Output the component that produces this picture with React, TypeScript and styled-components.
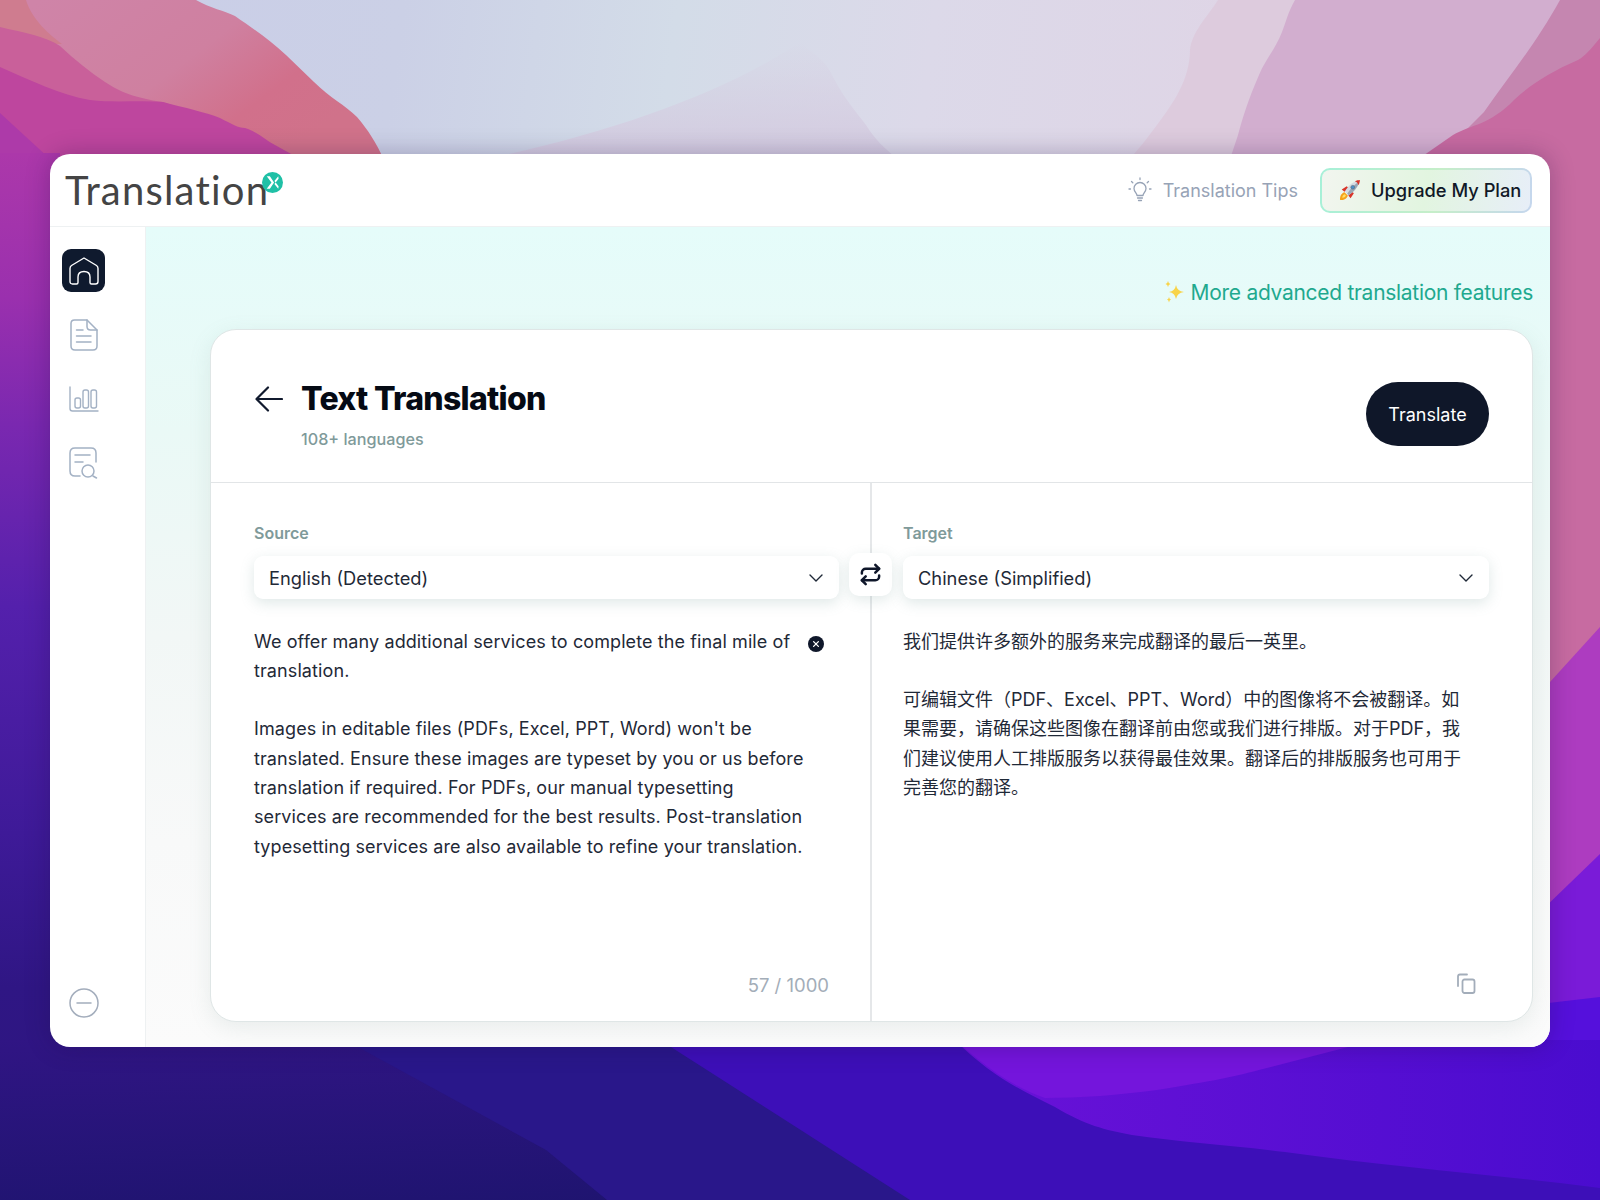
import { FC } from 'react';
import { ChevronDown, Repeat } from 'lucide-react';
import styled, { createGlobalStyle } from 'styled-components';

const GlobalStyle = createGlobalStyle`
  html, body {
    margin: 0;
    padding: 0;
  }
  body {
    font-family: Inter, "Noto Sans CJK SC", "Liberation Sans", sans-serif;
    color: #1f2937;
  }
`;

const SOURCE_PARAGRAPHS = [
  'We offer many additional services to complete the final mile of translation.',
  "Images in editable files (PDFs, Excel, PPT, Word) won't be translated. Ensure these images are typeset by you or us before translation if required. For PDFs, our manual typesetting services are recommended for the best results. Post-translation typesetting services are also available to refine your translation.",
];

const TARGET_PARAGRAPHS = [
  '我们提供许多额外的服务来完成翻译的最后一英里。',
  '可编辑文件（PDF、Excel、PPT、Word）中的图像将不会被翻译。如果需要，请确保这些图像在翻译前由您或我们进行排版。对于PDF，我们建议使用人工排版服务以获得最佳效果。翻译后的排版服务也可用于完善您的翻译。',
];

const Wallpaper: FC = () => (
  <WallpaperSvg viewBox="0 0 1600 1200" preserveAspectRatio="none">
    <defs>
      <linearGradient id="sky" x1="0" y1="0" x2="1" y2="0.1">
        <stop offset="0" stopColor="#c9cde8" />
        <stop offset="0.25" stopColor="#cbd0e6" />
        <stop offset="0.42" stopColor="#d3dce8" />
        <stop offset="0.58" stopColor="#dcd9e9" />
        <stop offset="1" stopColor="#e2d0e2" />
      </linearGradient>
      <linearGradient id="hillFade" gradientUnits="userSpaceOnUse" x1="0" y1="42" x2="0" y2="150">
        <stop offset="0" stopColor="#d7cce0" stopOpacity="0" />
        <stop offset="1" stopColor="#d3cbe0" stopOpacity="0.95" />
      </linearGradient>
      <linearGradient id="coral" x1="0.05" y1="0.1" x2="0.95" y2="0.6">
        <stop offset="0" stopColor="#cf84a8" />
        <stop offset="0.5" stopColor="#cf80a0" />
        <stop offset="0.78" stopColor="#d1708b" />
        <stop offset="1" stopColor="#d0728a" />
      </linearGradient>
      <linearGradient id="leftEdge" x1="0" y1="0" x2="0" y2="1">
        <stop offset="0" stopColor="#ac38aa" />
        <stop offset="0.16" stopColor="#9a30ae" />
        <stop offset="0.3" stopColor="#7a28b0" />
        <stop offset="0.5" stopColor="#5420ac" />
        <stop offset="0.75" stopColor="#3e1a98" />
        <stop offset="0.92" stopColor="#2f1684" />
        <stop offset="1" stopColor="#2e1682" />
      </linearGradient>
      <linearGradient id="navy" x1="0" y1="0" x2="0.4" y2="1">
        <stop offset="0" stopColor="#301584" />
        <stop offset="1" stopColor="#1f1470" />
      </linearGradient>
      <linearGradient id="bright" x1="0" y1="0" x2="1" y2="0">
        <stop offset="0" stopColor="#6a12d8" />
        <stop offset="1" stopColor="#4a0ccf" />
      </linearGradient>
    </defs>
    <rect width="1600" height="1200" fill="url(#sky)" />

    {/* top right hills */}
    <path d="M800 42 C815 55 825 60 832 75 C845 100 855 110 866 125 C875 140 885 148 894 156 H500 C620 130 730 90 800 42 Z" fill="url(#hillFade)" />
    <path d="M1218 0 C1205 20 1192 32 1190 50 C1190 80 1172 105 1157 125 C1147 138 1140 148 1132 156 H1240 L1300 0 Z" fill="#ddcbdd" />
    <path d="M1295 0 C1288 12 1286 22 1282 32 C1275 50 1265 60 1259 75 C1248 100 1242 120 1238 135 L1231 156 H1600 V0 Z" fill="#d2aecf" />
    <path d="M1560 0 C1535 45 1510 75 1484 112 L1440 156 H1600 V0 Z" fill="#c586b0" />
    <path d="M1600 38 C1590 50 1585 56 1578 60 C1550 72 1530 85 1514 100 C1490 125 1470 125 1453 135 L1417 160 V700 H1600 Z" fill="#c76ba1" />

    {/* top left ridges */}
    <path d="M0 0 H196 C210 8 225 11 235 16 C255 30 270 40 286 55 L314 82 C330 98 345 105 357 117 C368 130 376 142 384 160 H0 Z" fill="url(#coral)" />
    <path d="M0 0 H26 C32 20 50 35 62 44 H0 Z" fill="#cf7c8f" />
    <path d="M0 27 C25 33 45 36 60 46 C75 60 90 72 105 82 C120 92 135 98 163 102 L240 128 L302 160 H0 Z" fill="#c9609a" />
    <path d="M0 67 C30 80 60 95 90 100 C115 103 140 100 163 102 C185 108 205 112 220 118 C232 124 238 128 245 128 C258 132 265 140 275 145 L302 160 H0 Z" fill="#be469e" />
    <path d="M0 113 L62 170 H0 Z" fill="#ad3aa9" />

    {/* side strips */}
    <rect x="0" y="153" width="60" height="907" fill="url(#leftEdge)" />
    <path d="M1540 693 L1600 627 V860 L1540 912 Z" fill="#ad3cc0" />
    <path d="M1540 912 L1600 854 V1000 L1540 1004 Z" fill="#7a1bd8" />
    <path d="M1540 1004 L1600 997 V1200 H1540 Z" fill="#5510dc" />

    {/* bottom ridges */}
    <rect x="0" y="1040" width="1600" height="160" fill="url(#navy)" />
    <path d="M345 1040 L546 1150 L607 1200 H920 V1040 Z" fill="#29178a" />
    <path d="M660 1040 L910 1200 H1600 V1040 Z" fill="#3d0fb8" />
    <path d="M955 1040 C990 1075 1020 1090 1055 1107 C1085 1125 1105 1130 1132 1135 C1180 1142 1230 1145 1285 1152 C1400 1168 1500 1175 1600 1188 V1040 Z" fill="url(#bright)" />
    <path d="M955 1040 C990 1070 1015 1088 1045 1098 C1080 1098 1120 1095 1157 1090 C1200 1083 1230 1078 1259 1070 L1375 1040 Z" fill="#7415dc" />
  </WallpaperSvg>
);

const HomeIcon: FC = () => (
  <svg width="30" height="28" viewBox="0 0 30 28" fill="none" stroke="#fff" strokeWidth="1.4" strokeLinejoin="round">
    <path d="M15 1 L27.5 8.5 Q29 9.5 29 11.5 V24.5 Q29 27 26.5 27 H22.5 Q21 27 21 25.5 V20 Q21 14.5 15 14.5 Q9 14.5 9 20 V25.5 Q9 27 7.5 27 H3.5 Q1 27 1 24.5 V11.5 Q1 9.5 2.5 8.5 Z" />
  </svg>
);

const DocIcon: FC = () => (
  <svg width="28" height="32" viewBox="0 0 28 32" fill="none" stroke="#a3b1c4" strokeWidth="1.5" strokeLinecap="round" strokeLinejoin="round">
    <path d="M4.5 1 H17 L27 11 V27 Q27 31 23 31 H5 Q1 31 1 27 V4.5 Q1 1 4.5 1 Z" />
    <path d="M17 1 V7.5 Q17 11 20.5 11 H27" />
    <path d="M6.5 11 H13 M6.5 17 H21 M6.5 23 H21" />
  </svg>
);

const ChartIcon: FC = () => (
  <svg width="30" height="26" viewBox="0 0 30 26" fill="none" stroke="#a3b1c4" strokeWidth="1.4" strokeLinecap="round" strokeLinejoin="round">
    <path d="M1 1 V22.5 Q1 25 3.5 25 H29" />
    <rect x="6" y="12" width="5.5" height="10" rx="2" />
    <rect x="14" y="4" width="5.5" height="18" rx="2" />
    <rect x="22" y="4" width="5.5" height="18" rx="2" />
  </svg>
);

const SearchDocIcon: FC = () => (
  <svg width="30" height="32" viewBox="0 0 30 32" fill="none" stroke="#a3b1c4" strokeWidth="1.5" strokeLinecap="round" strokeLinejoin="round">
    <path d="M11 29 H6 Q1 29 1 24 V6 Q1 1 6 1 H22 Q27 1 27 6 V15" />
    <path d="M6 8 H21 M6 15 H14" />
    <circle cx="19" cy="24" r="6" />
    <path d="M24 29 L27.5 31" />
  </svg>
);

const MinusCircleIcon: FC = () => (
  <svg width="30" height="30" viewBox="0 0 30 30" fill="none" stroke="#a3adbc" strokeWidth="1.5" strokeLinecap="round">
    <circle cx="15" cy="15" r="14" />
    <path d="M8 15 H22" />
  </svg>
);

const BulbIcon: FC = () => (
  <svg width="24" height="26" viewBox="0 0 24 26" fill="none" stroke="#97a3b6" strokeWidth="1.3" strokeLinecap="round" strokeLinejoin="round">
    <path d="M12 1 V2.5 M3.5 4.5 L4.8 5.8 M20.5 4.5 L19.2 5.8 M1 12 H2.5 M21.5 12 H23" />
    <path d="M9 18.5 C9 16 6 15 6 11.5 A6 6 0 0 1 18 11.5 C18 15 15 16 15 18.5 Z" />
    <path d="M9.5 21 H14.5 M10.5 23.5 H13.5" />
  </svg>
);

const RocketIcon: FC = () => (
  <svg width="22" height="22" viewBox="0 0 20 20">
    <path d="M1 19 C0.5 15.5 2.5 12.5 5 12 L8 15 C7.5 17.5 4.5 19.5 1 19 Z" fill="#f6a21a" />
    <path d="M3 17 C2.9 15.3 3.9 14 5.2 13.8 L6.2 14.8 C6 16 4.8 17.1 3 17 Z" fill="#ffe066" />
    <path d="M2.5 9.5 L7 6.5 L8.5 8 L5 11.5 Z M10.5 17.5 L13.5 13 L12 11.5 L8.5 15 Z" fill="#d8352a" />
    <path d="M5.5 11.5 C8 6.5 12 2.5 19 1 C17.5 8 13.5 12 8.5 14.5 Z" fill="#d5dce3" />
    <path d="M7.5 13.5 C10 9 14 5 18.4 2.2 C17 8 13 12 8.5 14.5 Z" fill="#9aa8b5" />
    <path d="M14.3 2.1 C16 2.6 17.4 4 17.9 5.7 C18.6 3.8 18.9 2.4 19 1 C17.6 1.1 16.2 1.4 14.3 2.1 Z" fill="#d8352a" />
    <circle cx="12.5" cy="7.5" r="1.7" fill="#4a90c8" stroke="#5d6b78" strokeWidth="0.6" />
  </svg>
);

const SparkleIcon: FC = () => (
  <svg width="20" height="22" viewBox="0 0 20 22" fill="#f8d44a">
    <path d="M11 4 Q12 10 19 11 Q12 12 11 18 Q10 12 4 11 Q10 10 11 4 Z" />
    <path d="M3 0 Q3.4 2.6 5.5 3 Q3.4 3.4 3 6 Q2.6 3.4 0.5 3 Q2.6 2.6 3 0 Z" />
    <path d="M4 16 Q4.3 18 6 18.5 Q4.3 19 4 21.5 Q3.7 19 2 18.5 Q3.7 18 4 16 Z" />
  </svg>
);

const BackIcon: FC = () => (
  <svg width="28" height="26" viewBox="0 0 28 26" fill="none" stroke="#111a2e" strokeWidth="2.2" strokeLinecap="round" strokeLinejoin="round">
    <path d="M27 13 H2 M13 1.5 L1.5 13 L13 24.5" />
  </svg>
);

const ClearIcon: FC = () => (
  <svg width="16" height="16" viewBox="0 0 16 16">
    <circle cx="8" cy="8" r="8" fill="#0f172a" />
    <path d="M5.6 5.6 L10.4 10.4 M10.4 5.6 L5.6 10.4" stroke="#fff" strokeWidth="1.3" strokeLinecap="round" />
  </svg>
);

const CopyIcon: FC = () => (
  <svg width="20" height="21" viewBox="0 0 20 21" fill="none" stroke="#a3adba" strokeWidth="1.8" strokeLinecap="round" strokeLinejoin="round">
    <path d="M2 13 V3.5 Q2 1.5 4 1.5 H11" />
    <rect x="6.5" y="6.5" width="12" height="13.5" rx="2" />
  </svg>
);

const LanguageSelect: FC<{ value: string }> = ({ value }) => (
  <SelectBox>
    <span>{value}</span>
    <ChevronDown size={24} strokeWidth={1.4} color="#1f2937" />
  </SelectBox>
);

const App: FC = () => (
  <Page>
    <GlobalStyle />
    <Wallpaper />
    <AppWindow>
      <TopBar>
        <Logo>
          <LogoText>Translation</LogoText>
          <LogoBadge>
            <svg width="21" height="21" viewBox="0 0 20 20">
              <circle cx="10" cy="10" r="10" fill="#1fc0a6" />
              <path d="M4.5 4 L9 10 L4.5 16 H7.5 L11.5 10 L7.5 4 Z M15.5 4 L11.8 8.5 L13 10 L15.8 6.5 Z M15.5 16 L11.8 11.5 L13 10 L15.8 13.5 Z" fill="#fff" />
            </svg>
          </LogoBadge>
        </Logo>
        <TopActions>
          <TipsLink>
            <BulbIcon />
            Translation Tips
          </TipsLink>
          <UpgradeButton>
            <RocketIcon />
            Upgrade My Plan
          </UpgradeButton>
        </TopActions>
      </TopBar>

      <Body>
        <Sidebar>
          <NavList>
            <NavItem $active>
              <HomeIcon />
            </NavItem>
            <NavItem>
              <DocIcon />
            </NavItem>
            <NavItem>
              <ChartIcon />
            </NavItem>
            <NavItem>
              <SearchDocIcon />
            </NavItem>
          </NavList>
          <NavItem>
            <MinusCircleIcon />
          </NavItem>
        </Sidebar>

        <Main>
          <PromoRow>
            <SparkleIcon />
            More advanced translation features
          </PromoRow>

          <Card>
            <CardHeader>
              <div>
                <TitleRow>
                  <BackIcon />
                  <Title>Text Translation</Title>
                </TitleRow>
                <Subtitle>108+ languages</Subtitle>
              </div>
              <TranslateButton>Translate</TranslateButton>
            </CardHeader>

            <Panels>
              <SourcePanel>
                <FieldLabel>Source</FieldLabel>
                <LanguageSelect value="English (Detected)" />
                <SourceText>
                  <ClearButton>
                    <ClearIcon />
                  </ClearButton>
                  {SOURCE_PARAGRAPHS.map((p) => (
                    <p key={p}>{p}</p>
                  ))}
                </SourceText>
                <Counter>57 / 1000</Counter>
                <SwapButton>
                  <Repeat size={23} strokeWidth={2.6} color="#0f172a" />
                </SwapButton>
              </SourcePanel>

              <TargetPanel>
                <FieldLabel>Target</FieldLabel>
                <LanguageSelect value="Chinese (Simplified)" />
                <TargetText>
                  {TARGET_PARAGRAPHS.map((p) => (
                    <p key={p}>{p}</p>
                  ))}
                </TargetText>
                <CopyRow>
                  <CopyIcon />
                </CopyRow>
              </TargetPanel>
            </Panels>
          </Card>
        </Main>
      </Body>
    </AppWindow>
  </Page>
);

const Page = styled.div`
  position: relative;
  width: 1600px;
  height: 1200px;
  box-sizing: border-box;
  padding: 154px 50px 153px;
  overflow: hidden;
`;

const WallpaperSvg = styled.svg`
  position: absolute;
  inset: 0;
  width: 100%;
  height: 100%;
`;

const AppWindow = styled.div`
  position: relative;
  display: flex;
  flex-direction: column;
  height: 100%;
  background: #fff;
  border-radius: 20px;
  overflow: hidden;
  box-shadow: 0 0 24px rgba(30, 10, 60, 0.28);
`;

const TopBar = styled.header`
  display: flex;
  align-items: center;
  justify-content: space-between;
  flex: none;
  box-sizing: border-box;
  height: 73px;
  padding: 0 18px 0 15px;
  border-bottom: 1px solid #eef1f2;
`;

const Logo = styled.div`
  position: relative;
  display: flex;
  align-items: center;
`;

const LogoText = styled.span`
  font-family: Lato, sans-serif;
  font-size: 40px;
  font-weight: 400;
  letter-spacing: 1.2px;
  color: #444;
`;

const LogoBadge = styled.span`
  position: absolute;
  top: 6px;
  right: -14px;
  display: block;
  width: 21px;
  height: 21px;
`;

const TopActions = styled.div`
  display: flex;
  align-items: center;
  gap: 22px;
`;

const TipsLink = styled.a`
  display: flex;
  align-items: center;
  gap: 11px;
  font-size: 18px;
  color: #97a3b6;
`;

const UpgradeButton = styled.button`
  display: flex;
  align-items: center;
  gap: 10px;
  box-sizing: border-box;
  width: 212px;
  height: 45px;
  padding: 0 0 0 17px;
  border: 2px solid transparent;
  border-radius: 10px;
  background:
    linear-gradient(100deg, #f2f5ef, #e2f5e0 50%, #e7eef8) padding-box,
    linear-gradient(100deg, #a6f0d8, #c6eec9 55%, #c5d6ee) border-box;
  font-family: inherit;
  font-size: 18.3px;
  font-weight: 500;
  color: #111827;
`;

const Body = styled.div`
  display: flex;
  flex: 1;
  min-height: 0;
`;

const Sidebar = styled.aside`
  display: flex;
  flex-direction: column;
  justify-content: space-between;
  flex: none;
  box-sizing: border-box;
  width: 96px;
  padding: 22px 0 23px 12px;
  border-right: 1px solid #eef1f2;
`;

const NavList = styled.nav`
  display: flex;
  flex-direction: column;
  gap: 21.3px;
`;

const NavItem = styled.div<{ $active?: boolean }>`
  display: flex;
  align-items: center;
  justify-content: center;
  width: 43px;
  height: 43px;
  border-radius: 9px;
  background: ${({ $active }) => ($active ? '#0f1a2e' : 'transparent')};
`;

const Main = styled.main`
  display: flex;
  flex-direction: column;
  flex: 1;
  min-width: 0;
  box-sizing: border-box;
  padding: 50px 17px 25px 64px;
  background: linear-gradient(180deg, #e5fcfa 0%, #eaf9f6 25%, #f2f7f6 50%, #f8f9f9 75%, #fbfbfb 100%);
`;

const PromoRow = styled.div`
  display: flex;
  align-items: center;
  justify-content: flex-end;
  gap: 6px;
  height: 30px;
  margin-bottom: 22px;
  font-size: 21px;
  letter-spacing: -0.29px;
  color: #1fa98f;
`;

const Card = styled.section`
  display: flex;
  flex-direction: column;
  flex: 1;
  min-height: 0;
  background: #fff;
  border: 1px solid #dfe6e6;
  border-radius: 26px;
  box-shadow: 0 6px 22px rgba(120, 150, 145, 0.14);
  overflow: hidden;
`;

const CardHeader = styled.div`
  display: flex;
  align-items: flex-start;
  justify-content: space-between;
  flex: none;
  box-sizing: border-box;
  height: 153px;
  padding: 52px 43px 0 44px;
  border-bottom: 1px solid #e2e5e7;
`;

const TitleRow = styled.div`
  display: flex;
  align-items: center;
  gap: 18px;
  margin-top: -1px;
`;

const Title = styled.h1`
  margin: 0;
  font-size: 32px;
  line-height: 36px;
  font-weight: 800;
  letter-spacing: -0.7px;
  color: #050a14;
`;

const Subtitle = styled.div`
  margin: 12px 0 0 46px;
  font-size: 16.2px;
  line-height: 20px;
  font-weight: 500;
  color: #7f9a9a;
`;

const TranslateButton = styled.button`
  width: 123px;
  height: 64px;
  border: 0;
  border-radius: 32px;
  background: #0f1729;
  font-family: inherit;
  font-size: 18px;
  color: #fff;
`;

const Panels = styled.div`
  display: flex;
  flex: 1;
  min-height: 0;
`;

const PanelBase = styled.div`
  position: relative;
  display: flex;
  flex-direction: column;
  box-sizing: border-box;
  padding-top: 40px;
`;

const SourcePanel = styled(PanelBase)`
  flex: none;
  width: 661px;
  padding-left: 43px;
  padding-right: 31px;
  border-right: 2px solid #e5e7e9;
`;

const TargetPanel = styled(PanelBase)`
  flex: 1;
  padding-left: 31px;
  padding-right: 43px;
`;

const FieldLabel = styled.div`
  height: 20px;
  margin-bottom: 13px;
  font-size: 16px;
  line-height: 20px;
  font-weight: 600;
  color: #7f9a9a;
`;

const SelectBox = styled.div`
  display: flex;
  align-items: center;
  justify-content: space-between;
  flex: none;
  box-sizing: border-box;
  height: 43px;
  padding: 0 11px 0 15px;
  border-radius: 9px;
  background: #fff;
  box-shadow: 0 4px 14px rgba(110, 150, 145, 0.22);
  font-size: 18.3px;
  color: #1f2937;
`;

const SwapButton = styled.div`
  position: absolute;
  top: 70px;
  right: -22px;
  display: flex;
  align-items: center;
  justify-content: center;
  width: 43px;
  height: 43px;
  border-radius: 10px;
  background: #fff;
  box-shadow: 0 4px 14px rgba(110, 150, 145, 0.2);
`;

const bodyText = `
  margin-top: 27.5px;
  font-size: 18px;
  line-height: 29.3px;
  color: #1f2937;
  p {
    margin: 0 0 29.3px;
  }
`;

const SourceText = styled.div`
  ${bodyText}
  position: relative;
  flex: 1;
  padding-right: 33px;
  letter-spacing: 0.1px;
`;

const TargetText = styled.div`
  ${bodyText}
  flex: 1;
  padding-right: 24px;
`;

const ClearButton = styled.span`
  position: absolute;
  top: 4px;
  right: 15px;
  display: block;
  width: 16px;
  height: 16px;
`;

const Counter = styled.div`
  flex: none;
  height: 24px;
  margin-bottom: 24px;
  padding-right: 10px;
  text-align: right;
  font-size: 18.5px;
  line-height: 24px;
  color: #a3adb8;
`;

const CopyRow = styled.div`
  display: flex;
  justify-content: flex-end;
  flex: none;
  height: 24px;
  margin-bottom: 24px;
  padding-right: 13px;
`;

export default App;
